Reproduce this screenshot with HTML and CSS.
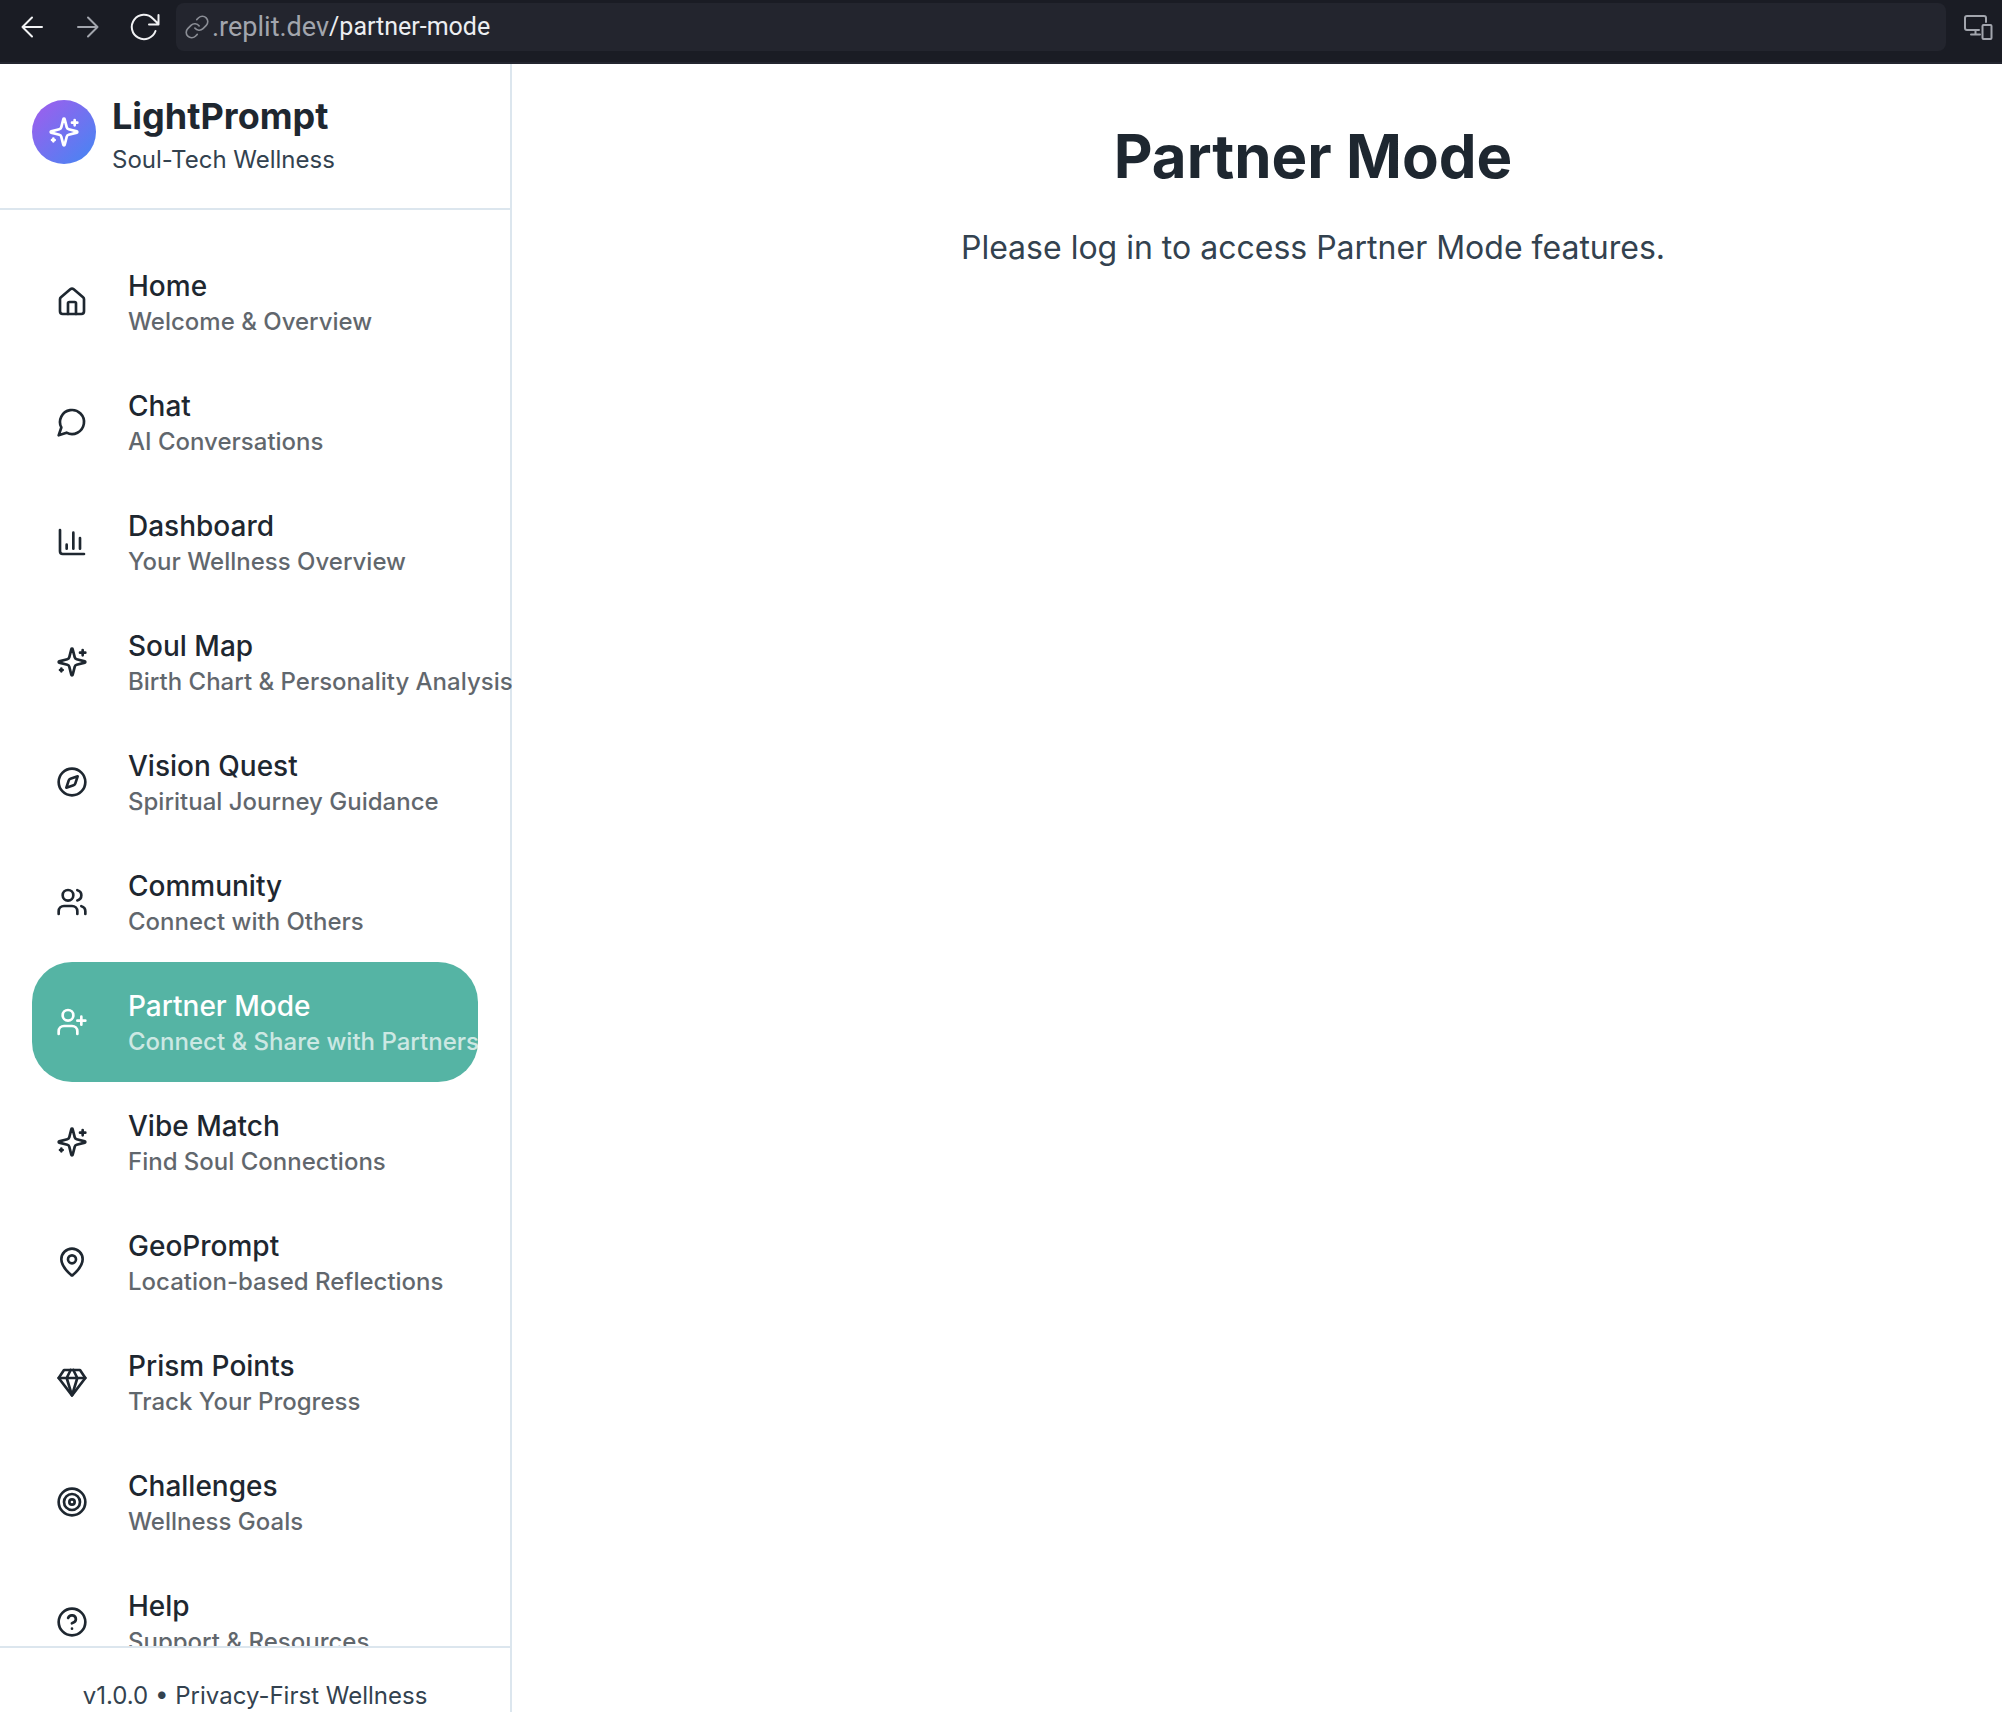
FILE: index.html
```html
<!DOCTYPE html>
<html lang="en">
<head>
<meta charset="utf-8">
<title>LightPrompt – Partner Mode</title>
<link rel="stylesheet" href="styles.css">
</head>
<body>
<svg class="sprite" aria-hidden="true">
  <symbol id="sparkles" viewBox="0 0 24 24"><path d="M9.937 15.5A2 2 0 0 0 8.5 14.063l-6.135-1.582a.5.5 0 0 1 0-.962L8.5 9.936A2 2 0 0 0 9.937 8.5l1.582-6.135a.5.5 0 0 1 .963 0L14.063 8.5A2 2 0 0 0 15.5 9.937l6.135 1.581a.5.5 0 0 1 0 .964L15.5 14.063a2 2 0 0 0-1.437 1.437l-1.582 6.135a.5.5 0 0 1-.963 0z"/><path d="M20 3v4M22 5h-4M4 17v2M5 18H3"/></symbol>
  <symbol id="home" viewBox="0 0 24 24"><path d="M15 21v-8a1 1 0 0 0-1-1h-4a1 1 0 0 0-1 1v8"/><path d="M3 10a2 2 0 0 1 .709-1.528l7-5.999a2 2 0 0 1 2.582 0l7 5.999A2 2 0 0 1 21 10v9a2 2 0 0 1-2 2H5a2 2 0 0 1-2-2z"/></symbol>
  <symbol id="chat" viewBox="0 0 24 24"><path d="M7.9 20A9 9 0 1 0 4 16.1L2 22Z"/></symbol>
  <symbol id="chart" viewBox="0 0 24 24"><path d="M3 3v16a2 2 0 0 0 2 2h16M18 17V9M13 17V5M8 17v-3"/></symbol>
  <symbol id="compass" viewBox="0 0 24 24"><path d="m16.24 7.76-1.804 5.411a2 2 0 0 1-1.265 1.265L7.76 16.24l1.804-5.411a2 2 0 0 1 1.265-1.265z"/><circle cx="12" cy="12" r="10"/></symbol>
  <symbol id="users" viewBox="0 0 24 24"><path d="M16 21v-2a4 4 0 0 0-4-4H6a4 4 0 0 0-4 4v2"/><circle cx="9" cy="7" r="4"/><path d="M22 21v-2a4 4 0 0 0-3-3.87M16 3.13a4 4 0 0 1 0 7.75"/></symbol>
  <symbol id="user-plus" viewBox="0 0 24 24"><path d="M16 21v-2a4 4 0 0 0-4-4H6a4 4 0 0 0-4 4v2"/><circle cx="9" cy="7" r="4"/><path d="M19 8v6M22 11h-6"/></symbol>
  <symbol id="pin" viewBox="0 0 24 24"><path d="M20 10c0 4.993-5.539 10.193-7.399 11.799a1 1 0 0 1-1.202 0C9.539 20.193 4 14.993 4 10a8 8 0 0 1 16 0"/><circle cx="12" cy="10" r="3"/></symbol>
  <symbol id="gem" viewBox="0 0 24 24"><path d="M6 3h12l4 6-10 13L2 9Z"/><path d="M11 3 8 9l4 13 4-13-3-6M2 9h20"/></symbol>
  <symbol id="target" viewBox="0 0 24 24"><circle cx="12" cy="12" r="10"/><circle cx="12" cy="12" r="6"/><circle cx="12" cy="12" r="2"/></symbol>
  <symbol id="help" viewBox="0 0 24 24"><circle cx="12" cy="12" r="10"/><path d="M9.09 9a3 3 0 0 1 5.83 1c0 2-3 3-3 3M12 17h.01"/></symbol>
</svg>

<header class="browser-bar">
  <button class="bar-button" aria-label="Back"><svg viewBox="0 0 32 32"><path d="M26 16H6.500M16 6.500 6.500 16l9.500 9.500"/></svg></button>
  <button class="bar-button bar-button--muted" aria-label="Forward"><svg viewBox="0 0 32 32"><path d="M6 16h19.500M16 6.500l9.500 9.500-9.500 9.500"/></svg></button>
  <button class="bar-button" aria-label="Reload"><svg viewBox="0 0 32 32"><path d="M27.500 20A12.200 12.200 0 1 1 24.800 7.500L30.500 13M30.500 4v9.500H21"/></svg></button>
  <div class="address">
    <svg class="address-icon" viewBox="0 0 24 24"><path d="M10 13a5 5 0 0 0 7.540.540l3-3a5 5 0 0 0-7.070-7.070l-1.720 1.710"/><path d="M14 11a5 5 0 0 0-7.540-.540l-3 3a5 5 0 0 0 7.070 7.070l1.710-1.710"/></svg>
    <label class="address-host" for="path">.replit.dev</label>
    <input class="address-path" id="path" type="text" value="/partner-mode">
  </div>
  <button class="bar-button bar-button--device" aria-label="Device preview"><svg viewBox="0 0 32 32"><path d="M24 11V7a2 2 0 0 0-2-2H5a2 2 0 0 0-2 2v10a2 2 0 0 0 2 2h12M13.500 19v4M9 23.500h9"/><rect x="20.500" y="14" width="9" height="14" rx="1"/></svg></button>
</header>

<div class="app">
  <aside class="sidebar">
    <div class="brand">
      <span class="brand-mark"><svg class="icon"><use href="#sparkles"/></svg></span>
      <div>
        <div class="brand-name">LightPrompt</div>
        <div class="brand-tag">Soul-Tech Wellness</div>
      </div>
    </div>
    <nav class="nav">
      <a class="nav-item" href="#"><svg class="icon"><use href="#home"/></svg><span class="nav-text"><span class="nav-title">Home</span><span class="nav-sub">Welcome &amp; Overview</span></span></a>
      <a class="nav-item" href="#"><svg class="icon"><use href="#chat"/></svg><span class="nav-text"><span class="nav-title">Chat</span><span class="nav-sub">AI Conversations</span></span></a>
      <a class="nav-item" href="#"><svg class="icon"><use href="#chart"/></svg><span class="nav-text"><span class="nav-title">Dashboard</span><span class="nav-sub">Your Wellness Overview</span></span></a>
      <a class="nav-item" href="#"><svg class="icon"><use href="#sparkles"/></svg><span class="nav-text"><span class="nav-title">Soul Map</span><span class="nav-sub">Birth Chart &amp; Personality Analysis</span></span></a>
      <a class="nav-item" href="#"><svg class="icon"><use href="#compass"/></svg><span class="nav-text"><span class="nav-title">Vision Quest</span><span class="nav-sub">Spiritual Journey Guidance</span></span></a>
      <a class="nav-item" href="#"><svg class="icon"><use href="#users"/></svg><span class="nav-text"><span class="nav-title">Community</span><span class="nav-sub">Connect with Others</span></span></a>
      <a class="nav-item nav-item--active" href="#" aria-current="page"><svg class="icon"><use href="#user-plus"/></svg><span class="nav-text"><span class="nav-title">Partner Mode</span><span class="nav-sub">Connect &amp; Share with Partners</span></span></a>
      <a class="nav-item" href="#"><svg class="icon"><use href="#sparkles"/></svg><span class="nav-text"><span class="nav-title">Vibe Match</span><span class="nav-sub">Find Soul Connections</span></span></a>
      <a class="nav-item" href="#"><svg class="icon"><use href="#pin"/></svg><span class="nav-text"><span class="nav-title">GeoPrompt</span><span class="nav-sub">Location-based Reflections</span></span></a>
      <a class="nav-item" href="#"><svg class="icon"><use href="#gem"/></svg><span class="nav-text"><span class="nav-title">Prism Points</span><span class="nav-sub">Track Your Progress</span></span></a>
      <a class="nav-item" href="#"><svg class="icon"><use href="#target"/></svg><span class="nav-text"><span class="nav-title">Challenges</span><span class="nav-sub">Wellness Goals</span></span></a>
      <a class="nav-item" href="#"><svg class="icon"><use href="#help"/></svg><span class="nav-text"><span class="nav-title">Help</span><span class="nav-sub">Support &amp; Resources</span></span></a>
    </nav>
    <footer class="version">v1.0.0 • Privacy-First Wellness</footer>
  </aside>
  <main class="content">
    <h1 class="content-title">Partner Mode</h1>
    <p class="content-text">Please log in to access Partner Mode features.</p>
  </main>
</div>
</body>
</html>
```
FILE: styles.css
```css
:root {
  --ink: #1e2730;
  --ink-soft: #33424f;
  --line: #dce6ee;
  --teal: #55b4a4;
}

* { box-sizing: border-box; }

body {
  margin: 0;
  height: 100vh;
  display: flex;
  flex-direction: column;
  background: #fff;
  color: var(--ink);
  font-family: Inter, "Liberation Sans", sans-serif;
}

.sprite { display: none; }

svg {
  fill: none;
  stroke: currentColor;
  stroke-width: 2;
  stroke-linecap: round;
  stroke-linejoin: round;
}

/* Browser bar */
.browser-bar {
  flex: none;
  display: flex;
  padding: 3px 0 11px 4px;
  background: #1a1c24;
  border-bottom: 2px solid #23252f;
}

.bar-button {
  width: 56px;
  height: 48px;
  padding: 0;
  display: grid;
  place-items: center;
  border: 0;
  background: none;
  color: #f1f2f4;
}
.bar-button svg { width: 32px; height: 32px; }
.bar-button--muted { color: #a2a5ad; }
.bar-button--device { width: 48px; color: #a2a5ad; }

.address {
  flex: 1;
  height: 48px;
  margin: 0 8px 0 4px;
  padding: 0 8px;
  display: flex;
  align-items: center;
  border-radius: 8px;
  background: #23252e;
  font-family: Roboto, "Noto Sans", sans-serif;
  line-height: 36px;
}
.address-icon {
  width: 26px;
  height: 26px;
  margin-right: 2px;
  color: #8b8e96;
  stroke-width: 1.5;
}
.address-host { color: #a2a5ad; font-size: 27px; }
.address-path {
  flex: 1;
  min-width: 0;
  padding: 0;
  border: 0;
  background: none;
  color: #eceef1;
  font: inherit;
  font-size: 25px;
}

/* Application */
.app {
  flex: 1;
  min-height: 0;
  display: flex;
}

.sidebar {
  flex: none;
  width: 512px;
  display: flex;
  flex-direction: column;
  border-right: 2px solid var(--line);
}

.brand {
  display: flex;
  align-items: center;
  gap: 16px;
  padding: 24px 32px 32px;
  border-bottom: 2px solid var(--line);
}
.brand-mark {
  width: 64px;
  height: 64px;
  display: grid;
  place-items: center;
  border-radius: 50%;
  background: linear-gradient(135deg, #a35ced, #4287f3);
  color: #fff;
}
.brand-name { font-size: 36px; line-height: 56px; font-weight: 700; }
.brand-tag { font-size: 24px; line-height: 32px; color: var(--ink-soft); }

.icon { flex: none; width: 32px; height: 32px; }

.nav {
  flex: 1;
  min-height: 0;
  padding: 32px;
  overflow-x: visible;
  overflow-y: clip;
}
.nav-item {
  display: flex;
  align-items: center;
  gap: 40px;
  padding: 24px;
  border-radius: 40px;
  color: var(--ink);
  font-weight: 500;
  text-decoration: none;
  white-space: nowrap;
}
.nav-item--active { background: var(--teal); color: #fff; }
.nav-text { display: flex; flex-direction: column; }
.nav-title { font-size: 28px; line-height: 40px; }
.nav-sub { font-size: 24px; line-height: 32px; opacity: 0.7; }

.version {
  padding: 32px 32px 0;
  border-top: 2px solid var(--line);
  color: var(--ink-soft);
  font-size: 24px;
  line-height: 32px;
  text-align: center;
}

.content {
  flex: 1;
  padding: 64px 0 64px 112px;
  text-align: center;
}
.content-title {
  margin: 0 0 40px;
  font-size: 60px;
  line-height: 56px;
  font-weight: 700;
}
.content-text {
  margin: 0;
  color: var(--ink-soft);
  font-size: 32px;
  line-height: 48px;
}
```
